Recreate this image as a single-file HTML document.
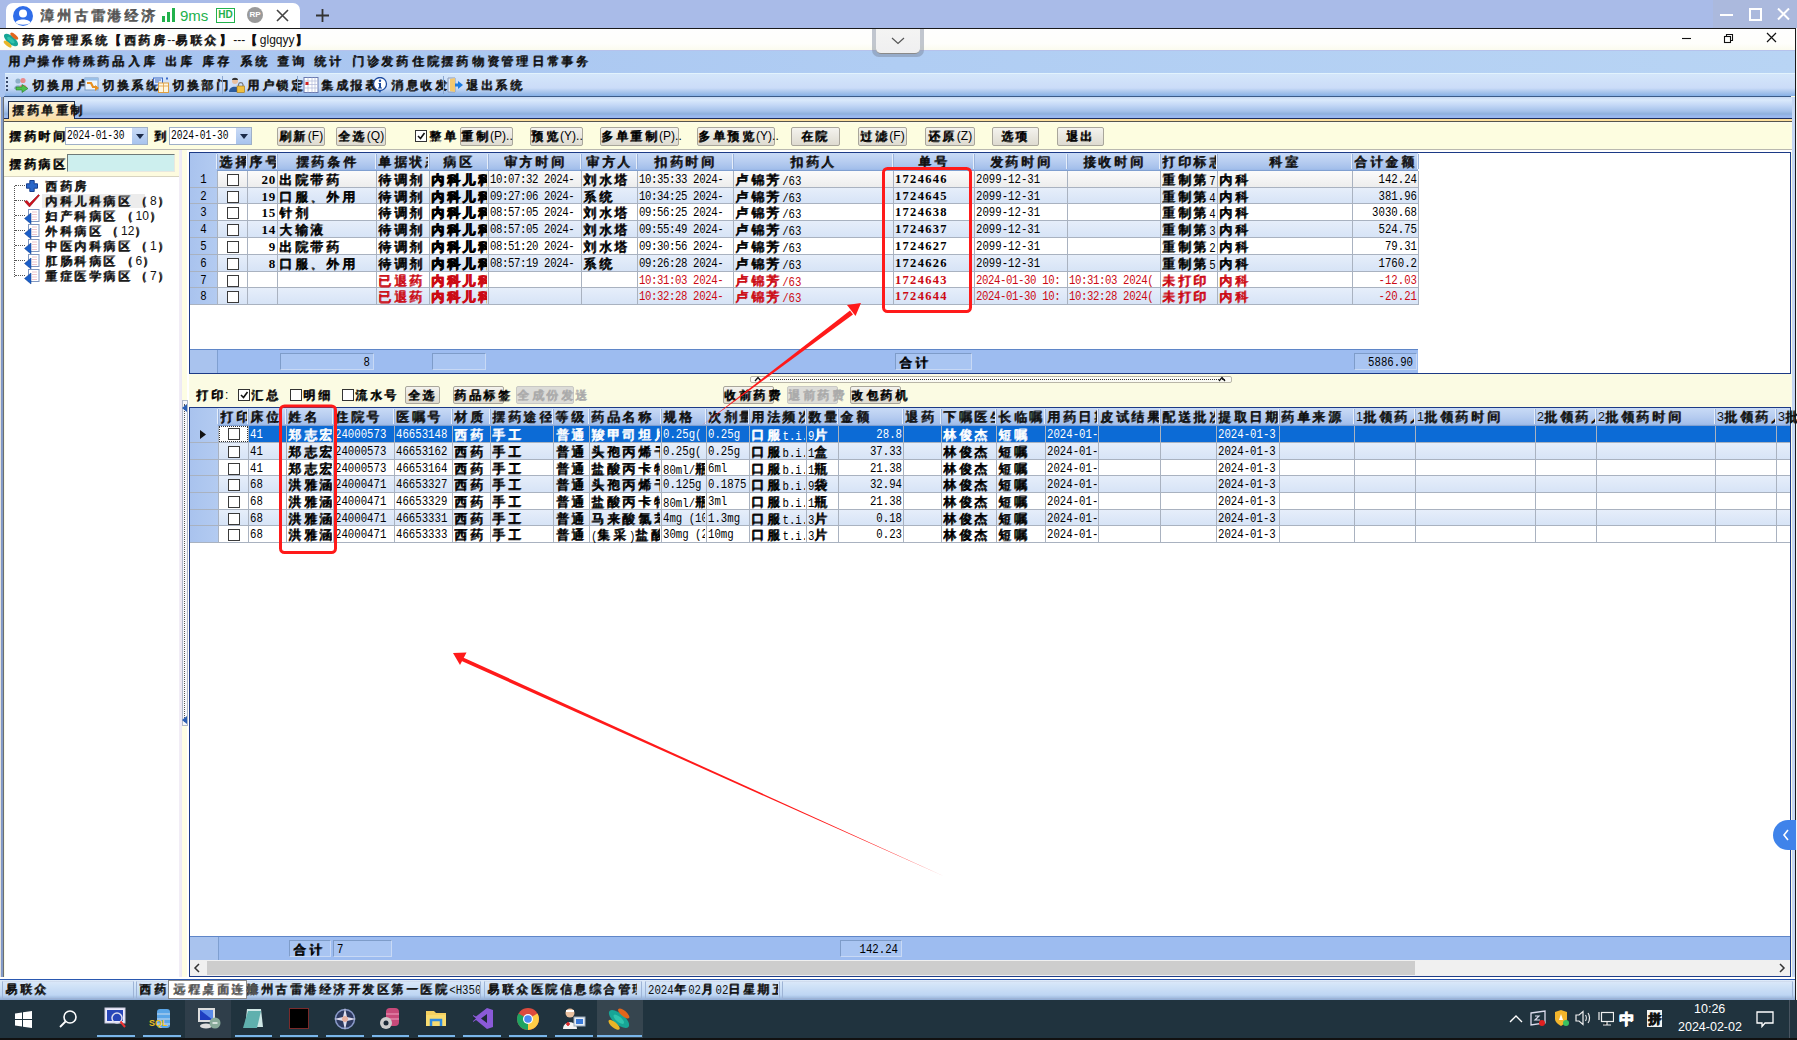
<!DOCTYPE html><html><head><meta charset="utf-8"><style>
*{box-sizing:border-box}
html,body{margin:0;padding:0}
body{width:1797px;height:1040px;position:relative;overflow:hidden;background:#fbfbe3;font-family:"Liberation Sans",sans-serif;font-size:12px;color:#000}
div{position:absolute}
.t{white-space:nowrap;line-height:14px}
.m{font-family:"Liberation Mono",monospace}
.c{font-family:"Liberation Sans",sans-serif;letter-spacing:0.21em;text-shadow:1px 0 0 currentColor,0 1px 0 currentColor}
.btn{background:linear-gradient(#f4f3ee,#dedbd0);border:1px solid #a9a69b;border-radius:2px;text-align:center;line-height:17px;white-space:nowrap;font-size:12px}

.g{white-space:nowrap;overflow:hidden;font-family:"Liberation Mono",monospace;font-size:10.7px;line-height:17px;height:17px}
.g .a{display:inline-block;transform:scaleY(1.25)}
.g .c{font-size:13px}
.hd{white-space:nowrap;overflow:hidden;font-family:"Liberation Sans",sans-serif;font-size:12.5px;line-height:17px;height:17px;color:#111}
.hd .c{font-size:13px}
.st .c{font-size:12px}
.b{font-weight:bold}
.red{color:#d0101a}
</style></head><body>
<div style="left:0px;top:0px;width:1797px;height:28px;background:#a9bbe8"></div>
<div style="left:6px;top:3px;width:294px;height:26px;background:#fff;border-radius:7px 7px 0 0"></div>
<svg style="position:absolute;left:12px;top:5px" width="22" height="22" viewBox="0 0 22 22"><circle cx="11" cy="11" r="10" fill="#2f6de9"/><circle cx="11" cy="8.5" r="4" fill="#fff"/><path d="M3.5 17.5 C5 13.5 17 13.5 18.5 17.5 C16 20.5 6 20.5 3.5 17.5Z" fill="#fff"/></svg>
<div class="t" style="left:40px;top:7px;font-size:13.5px;color:#555;line-height:17px;width:118px;overflow:hidden"><span class="c">漳州古雷港经济开</span><span class="a">...</span></div>
<svg style="position:absolute;left:161px;top:8px" width="16" height="14"><rect x="1" y="8" width="3" height="6" fill="#22b14c"/><rect x="6" y="4" width="3" height="10" fill="#22b14c"/><rect x="11" y="0" width="3" height="14" fill="#22b14c"/></svg>
<div class="t" style="left:180px;top:7px;font-size:15px;color:#22b14c;line-height:17px"><span class="a">9ms</span></div>
<div style="left:216px;top:8px;width:19px;height:15px;border:1.5px solid #22b14c;color:#22b14c;font-size:10px;font-weight:bold;text-align:center;line-height:12px"><span class="a">HD</span></div>
<div style="left:247px;top:7px;width:16px;height:16px;border-radius:50%;background:#9a9a9a;color:#fff;font-size:8px;font-weight:bold;text-align:center;line-height:16px"><span class="a">RP</span></div>
<svg style="position:absolute;left:276px;top:9px" width="13" height="13"><path d="M1 1L12 12M12 1L1 12" stroke="#444" stroke-width="1.6"/></svg>
<svg style="position:absolute;left:315px;top:8px" width="15" height="15"><path d="M7.5 1V14M1 7.5H14" stroke="#333" stroke-width="1.8"/></svg>
<div style="left:1713px;top:0px;width:84px;height:28px;background:#abb9dd"></div>
<svg style="position:absolute;left:1718px;top:8px" width="76" height="14"><path d="M2 7H15" stroke="#fff" stroke-width="2"/><rect x="32" y="1" width="11" height="11" fill="none" stroke="#fff" stroke-width="2"/><path d="M60 0.5L71 11.5M71 0.5L60 11.5" stroke="#fff" stroke-width="2"/></svg>
<div style="left:0px;top:28px;width:1797px;height:1px;background:#1a1a1a"></div>
<div style="left:0px;top:29px;width:1797px;height:21px;background:linear-gradient(#fefefe,#fefefb 70%,#fbfbee)"></div>
<svg style="position:absolute;left:2px;top:31px" width="18" height="18" viewBox="0 0 16 16"><ellipse cx="8" cy="8" rx="7.6" ry="3.4" transform="rotate(40 8 8)" fill="#17a596"/><ellipse cx="8" cy="8.2" rx="4" ry="1.6" transform="rotate(40 8 8)" fill="#3fd8bc" opacity=".6"/><ellipse cx="10.9" cy="4.6" rx="4.3" ry="1.7" transform="rotate(40 10.9 4.6)" fill="#e2661c"/><ellipse cx="5" cy="11.6" rx="4.3" ry="1.7" transform="rotate(40 5 11.6)" fill="#e9b526"/></svg>
<div class="t" style="left:22px;top:33px;font-size:12px;color:#111;line-height:15px"><span class="c">药房管理系统【西药房</span><span class="a">--</span><span class="c">易联众】</span><span class="a">---</span><span class="c">【</span><span class="a">glgqyy</span><span class="c">】</span></div>
<svg style="position:absolute;left:1680px;top:32px" width="100" height="14"><path d="M2 6.5H11" stroke="#111" stroke-width="1.1"/><rect x="44.5" y="4.5" width="6" height="6" fill="none" stroke="#111" stroke-width="1.1"/><path d="M46.5 4.5V2.5H52.5V8.5H50.5" fill="none" stroke="#111" stroke-width="1.1"/><path d="M87 1L96 10M96 1L87 10" stroke="#111" stroke-width="1.2"/></svg>
<div style="left:0px;top:50px;width:1797px;height:23px;background:linear-gradient(90deg,#a6c2ef,#b0cdf3 50%,#b8d4f4)"></div>
<div style="left:0px;top:50px;width:1797px;height:1px;background:#b6c2ec"></div>
<div class="t" style="left:8px;top:54px;font-size:12px;color:#111"><span class="c">用户操作</span></div>
<div class="t" style="left:68px;top:54px;font-size:12px;color:#111"><span class="c">特殊药品</span></div>
<div class="t" style="left:128px;top:54px;font-size:12px;color:#111"><span class="c">入库</span></div>
<div class="t" style="left:165px;top:54px;font-size:12px;color:#111"><span class="c">出库</span></div>
<div class="t" style="left:202px;top:54px;font-size:12px;color:#111"><span class="c">库存</span></div>
<div class="t" style="left:240px;top:54px;font-size:12px;color:#111"><span class="c">系统</span></div>
<div class="t" style="left:277px;top:54px;font-size:12px;color:#111"><span class="c">查询</span></div>
<div class="t" style="left:314px;top:54px;font-size:12px;color:#111"><span class="c">统计</span></div>
<div class="t" style="left:352px;top:54px;font-size:12px;color:#111"><span class="c">门诊发药</span></div>
<div class="t" style="left:412px;top:54px;font-size:12px;color:#111"><span class="c">住院摆药</span></div>
<div class="t" style="left:472px;top:54px;font-size:12px;color:#111"><span class="c">物资管理</span></div>
<div class="t" style="left:532px;top:54px;font-size:12px;color:#111"><span class="c">日常事务</span></div>
<div style="left:872px;top:29px;width:52px;height:28px;background:rgba(120,130,150,.45);border-radius:0 0 7px 7px"></div>
<div style="left:876px;top:29px;width:44px;height:25px;background:linear-gradient(#f4f4f3,#efeff0);border-bottom:1px solid #8a8a8a;border-radius:0 0 5px 5px"></div>
<svg style="position:absolute;left:891px;top:37px" width="14" height="8"><path d="M1 1L7 6.5L13 1" fill="none" stroke="#555" stroke-width="1.2"/></svg>
<div style="left:0px;top:73px;width:1797px;height:23px;background:linear-gradient(#e2f3fd 0,#e2f3fd 1px,#d4e6fa 1px,#cbdcf8 15px,#a9c5ec 19px,#86b0e6 23px)"></div>
<div style="left:0px;top:73px;width:5px;height:24px;background:#a9c4ef"></div>
<div style="left:4px;top:96px;width:1787px;height:1px;background:#3a5a88"></div>
<div style="left:6px;top:77px;width:2px;height:16px;background:repeating-linear-gradient(#3a4a6a 0 2px,transparent 2px 4px)"></div>
<svg style="position:absolute;left:13px;top:77px" width="16" height="16" viewBox="0 0 16 16"><circle cx="5" cy="4" r="2.6" fill="#8fb0c8"/><path d="M1 12C1 7 9 7 9 12Z" fill="#8fb0c8"/><circle cx="10" cy="3.5" r="2.6" fill="#e88a8a"/><path d="M6 11C6 6.5 14 6.5 14 11Z" fill="#e88a8a"/><path d="M3 10H9V7.5L15 11.5L9 15.5V13H3Z" fill="#4cc04c" stroke="#2a7a2a" stroke-width=".6"/></svg>
<div class="t" style="left:32px;top:78px;font-size:12px;color:#111"><span class="c">切换用户</span></div>
<svg style="position:absolute;left:84px;top:77px" width="16" height="16" viewBox="0 0 16 16"><rect x="1" y="1" width="13" height="12" fill="#eef5fb" stroke="#7a9ac0"/><rect x="1" y="1" width="13" height="2.5" fill="#9ac0e8"/><path d="M3 6L7 6L9 10L13 10" fill="none" stroke="#e89020" stroke-width="2.2"/><path d="M11 8L15 11L11 14Z" fill="#e89020"/></svg>
<div class="t" style="left:102px;top:78px;font-size:12px;color:#111"><span class="c">切换系统</span></div>
<svg style="position:absolute;left:153px;top:77px" width="16" height="16" viewBox="0 0 16 16"><rect x="0.5" y="1" width="9" height="7" fill="#dfe9f7" stroke="#3a6ac8"/><path d="M2 3H8M2 5H6" stroke="#3a6ac8"/><rect x="5.5" y="6" width="10" height="9.5" fill="#fdf6e0" stroke="#e0a040"/><path d="M5.5 9H15.5M10.5 6V15.5" stroke="#e0a040" stroke-width=".8"/><rect x="13" y="0.5" width="2" height="2" fill="#3a6ac8"/></svg>
<div class="t" style="left:172px;top:78px;font-size:12px;color:#111"><span class="c">切换部门</span></div>
<svg style="position:absolute;left:229px;top:77px" width="16" height="16" viewBox="0 0 16 16"><circle cx="6" cy="4" r="3" fill="#e8c0a0"/><path d="M3 3C3 0 9 0 9 3Z" fill="#333"/><path d="M0 15C0 8 11 8 11 15Z" fill="#2a5a9a"/><rect x="8" y="9" width="7.5" height="6.5" fill="#f0c040" stroke="#a07010" stroke-width=".6"/><path d="M9.5 9V7.5A2.3 2.3 0 0 1 14 7.5V9" fill="none" stroke="#777" stroke-width="1.2"/></svg>
<div class="t" style="left:247px;top:78px;font-size:12px;color:#111"><span class="c">用户锁定</span></div>
<svg style="position:absolute;left:303px;top:77px" width="16" height="16" viewBox="0 0 16 16"><rect x="1" y="0.5" width="14" height="15" fill="#fff" stroke="#6a7ab0"/><path d="M1 4H15M1 7.5H15M1 11H15M5 0.5V15.5M9 0.5V15.5M12 0.5V15.5" stroke="#b0b8d8" stroke-width=".7"/><rect x="2.5" y="5" width="3" height="3" fill="#d02020"/></svg>
<div class="t" style="left:321px;top:78px;font-size:12px;color:#111"><span class="c">集成报表</span></div>
<svg style="position:absolute;left:372px;top:77px" width="16" height="16" viewBox="0 0 16 16"><circle cx="8" cy="7" r="6.5" fill="#fff" stroke="#1a4aa0" stroke-width="1.3"/><path d="M6 13L8 16L9.5 13Z" fill="#1a4aa0"/><circle cx="8" cy="3.8" r="1.2" fill="#1a4aa0"/><path d="M6.5 6H9V10.5H10V11.5H6V10.5H7V7H6.5Z" fill="#1a4aa0"/></svg>
<div class="t" style="left:391px;top:78px;font-size:12px;color:#111"><span class="c">消息收发</span></div>
<svg style="position:absolute;left:447px;top:77px" width="16" height="16" viewBox="0 0 16 16"><path d="M1 1H8V15H1Z" fill="#dfe8f4" stroke="#8a9ab8"/><path d="M3 2L8 1V15L3 14Z" fill="#f2c870"/><path d="M16 8L11 4V6.5H8V9.5H11V12Z" fill="#1a7ae0"/></svg>
<div class="t" style="left:466px;top:78px;font-size:12px;color:#111"><span class="c">退出系统</span></div>
<div style="left:222px;top:76px;width:1px;height:18px;background:#8aa6cf"></div>
<div style="left:297px;top:76px;width:1px;height:18px;background:#8aa6cf"></div>
<div style="left:443px;top:76px;width:1px;height:18px;background:#8aa6cf"></div>
<div style="left:0px;top:97px;width:1797px;height:22px;background:linear-gradient(#c9daf3 0,#dae9fb 3px,#c4d8f6 8px,#a6c2ea 14px,#8eb0dc 17px,#9ab8ee 19px,#9ab8ee 22px)"></div>
<div style="left:4px;top:118px;width:1788px;height:1px;background:#1e2e5e"></div>
<div style="left:8px;top:101px;width:67px;height:19px;background:linear-gradient(#fdf1d8,#f8dca8);border:1px solid #1f2f4f;border-bottom:none"></div>
<div class="t" style="left:12px;top:103px;font-size:12px;color:#111"><span class="c">摆药单重制</span></div>
<div style="left:4px;top:119px;width:1788px;height:2px;background:#fddf9c"></div>
<div style="left:0px;top:97px;width:4px;height:884px;background:linear-gradient(90deg,#e6e2da 0 1px,#7c95cc 1px,#8aa0c4 3px,#6a6e72 3px)"></div>
<div style="left:1792px;top:97px;width:3px;height:884px;background:#c4d6f3"></div>
<div style="left:1795px;top:28px;width:1px;height:972px;background:#1a1a1a"></div>
<div style="left:1796px;top:28px;width:1px;height:972px;background:#f4f4f4"></div>
<div style="left:4px;top:121px;width:1788px;height:1px;background:#56554d"></div>
<div style="left:4px;top:122px;width:1788px;height:27px;background:linear-gradient(#fbfbf2 0,#fdfde0 2px)"></div>
<div style="left:4px;top:149px;width:1788px;height:1px;background:#b9b8b0"></div>
<div style="left:189px;top:150px;width:1603px;height:2px;background:#fff"></div>
<div class="t" style="left:9px;top:129px;font-size:12px"><span class="c">摆药时间</span><span class="a">:</span></div>
<div style="left:65px;top:127px;width:83px;height:18px;background:#fff;border:1px solid #9fb0c8"></div>
<div class="g" style="left:67px;top:127px;width:65px;font-size:9.6px"><span class="a">2024-01-30</span></div>
<div style="left:132px;top:128px;width:15px;height:16px;background:linear-gradient(#c9daf6,#a8c4ee)"></div>
<svg style="position:absolute;left:136px;top:134px" width="8" height="5"><path d="M0 0H8L4 5Z" fill="#1b2a49"/></svg>
<div class="t" style="left:154px;top:129px;font-size:12px"><span class="c">到</span></div>
<div style="left:169px;top:127px;width:83px;height:18px;background:#fff;border:1px solid #9fb0c8"></div>
<div class="g" style="left:171px;top:127px;width:65px;font-size:9.6px"><span class="a">2024-01-30</span></div>
<div style="left:236px;top:128px;width:15px;height:16px;background:linear-gradient(#c9daf6,#a8c4ee)"></div>
<svg style="position:absolute;left:240px;top:134px" width="8" height="5"><path d="M0 0H8L4 5Z" fill="#1b2a49"/></svg>
<div class="btn" style="left:277px;top:127px;width:48px;height:19px;"><span class="c">刷新</span><span class="a">(F)</span></div>
<div class="btn" style="left:336px;top:127px;width:50px;height:19px;"><span class="c">全选</span><span class="a">(Q)</span></div>
<div class="btn" style="left:460px;top:127px;width:53px;height:19px;"><span class="c">重制</span><span class="a">(P)..</span></div>
<div class="btn" style="left:530px;top:127px;width:53px;height:19px;"><span class="c">预览</span><span class="a">(Y)..</span></div>
<div class="btn" style="left:600px;top:127px;width:79px;height:19px;"><span class="c">多单重制</span><span class="a">(P)..</span></div>
<div class="btn" style="left:697px;top:127px;width:78px;height:19px;"><span class="c">多单预览</span><span class="a">(Y)..</span></div>
<div class="btn" style="left:791px;top:127px;width:49px;height:19px;"><span class="c">在院</span></div>
<div class="btn" style="left:858px;top:127px;width:49px;height:19px;"><span class="c">过滤</span><span class="a">(F)</span></div>
<div class="btn" style="left:925px;top:127px;width:50px;height:19px;"><span class="c">还原</span><span class="a">(Z)</span></div>
<div class="btn" style="left:992px;top:127px;width:47px;height:19px;"><span class="c">选项</span></div>
<div class="btn" style="left:1057px;top:127px;width:47px;height:19px;"><span class="c">退出</span></div>
<div style="left:415px;top:130px;width:12px;height:12px;background:#fff;border:1px solid #333"></div>
<svg style="position:absolute;left:416px;top:131px" width="10" height="10"><path d="M2 5L4.5 7.5L8.5 2" fill="none" stroke="#111" stroke-width="1.6"/></svg>
<div class="t" style="left:429px;top:129px;font-size:12px"><span class="c">整单</span></div>
<div style="left:4px;top:150px;width:185px;height:27px;background:#fdfbdf"></div>
<div style="left:4px;top:176px;width:177px;height:1px;background:#d8d4c0"></div>
<div class="t" style="left:9px;top:157px;font-size:12px"><span class="c">摆药病区</span><span class="a">:</span></div>
<div style="left:67px;top:154px;width:108px;height:18px;background:#cdefee;border:1px solid #6f7a78;border-right-color:#e8e8e0;border-bottom-color:#e8e8e0"></div>
<div style="left:5px;top:177px;width:176px;height:802px;background:#fff"></div>
<div style="left:179px;top:150px;width:10px;height:829px;background:linear-gradient(90deg,#f2eef6 0,#ece8f4 3px,#fdfde4 3px,#fdfde4 8px,#fff 8px)"></div>
<div style="left:14px;top:186px;width:1px;height:91px;border-left:1px dotted #555"></div>
<div style="left:15px;top:185px;width:10px;height:1px;border-top:1px dotted #555"></div>
<div class="t" style="left:45px;top:179px;font-size:12px;color:#111"><span class="c">西药房</span></div>
<svg style="position:absolute;left:26px;top:180px" width="12" height="12"><path d="M3.8 0.5H8.2V3.8H11.5V8.2H8.2V11.5H3.8V8.2H0.5V3.8H3.8Z" fill="#2a66c8" stroke="#173f8f" stroke-width="1"/></svg>
<div style="left:15px;top:200px;width:10px;height:1px;border-top:1px dotted #555"></div>
<div style="left:42px;top:194px;width:103px;height:14px;background:#ececec"></div>
<div class="t" style="left:45px;top:194px;font-size:12px;color:#111"><span class="c">内科儿科病区</span><span class="a"> </span><span class="c">（</span><span class="a">8</span><span class="c">）</span></div>
<svg style="position:absolute;left:24px;top:194px" width="16" height="14"><path d="M0.5 7.5L3 6.5L5.5 9.5L14.5 0.5L15.5 1.5L5.5 13Z" fill="#d0101c" stroke="#7a0a10" stroke-width=".5"/></svg>
<div style="left:15px;top:215px;width:10px;height:1px;border-top:1px dotted #555"></div>
<div class="t" style="left:45px;top:209px;font-size:12px;color:#111"><span class="c">妇产科病区</span><span class="a"> </span><span class="c">（</span><span class="a">10</span><span class="c">）</span></div>
<svg style="position:absolute;left:24px;top:208px" width="16" height="17"><rect x="4.5" y="1.5" width="10.5" height="12" fill="#fff" stroke="#7f96c0"/><path d="M8 4H13M8 6.5H13M8 9H13M8 11.5H13" stroke="#e8b8c0" stroke-width=".8"/><path d="M0.5 10.5L7 5V16Z" fill="#1a5ec8" stroke="#0f3a8a" stroke-width=".5"/></svg>
<div style="left:15px;top:230px;width:10px;height:1px;border-top:1px dotted #555"></div>
<div class="t" style="left:45px;top:224px;font-size:12px;color:#111"><span class="c">外科病区</span><span class="a"> </span><span class="c">（</span><span class="a">12</span><span class="c">）</span></div>
<svg style="position:absolute;left:24px;top:223px" width="16" height="17"><rect x="4.5" y="1.5" width="10.5" height="12" fill="#fff" stroke="#7f96c0"/><path d="M8 4H13M8 6.5H13M8 9H13M8 11.5H13" stroke="#e8b8c0" stroke-width=".8"/><path d="M0.5 10.5L7 5V16Z" fill="#1a5ec8" stroke="#0f3a8a" stroke-width=".5"/></svg>
<div style="left:15px;top:245px;width:10px;height:1px;border-top:1px dotted #555"></div>
<div class="t" style="left:45px;top:239px;font-size:12px;color:#111"><span class="c">中医内科病区</span><span class="a"> </span><span class="c">（</span><span class="a">1</span><span class="c">）</span></div>
<svg style="position:absolute;left:24px;top:238px" width="16" height="17"><rect x="4.5" y="1.5" width="10.5" height="12" fill="#fff" stroke="#7f96c0"/><path d="M8 4H13M8 6.5H13M8 9H13M8 11.5H13" stroke="#e8b8c0" stroke-width=".8"/><path d="M0.5 10.5L7 5V16Z" fill="#1a5ec8" stroke="#0f3a8a" stroke-width=".5"/></svg>
<div style="left:15px;top:260px;width:10px;height:1px;border-top:1px dotted #555"></div>
<div class="t" style="left:45px;top:254px;font-size:12px;color:#111"><span class="c">肛肠科病区</span><span class="a"> </span><span class="c">（</span><span class="a">6</span><span class="c">）</span></div>
<svg style="position:absolute;left:24px;top:253px" width="16" height="17"><rect x="4.5" y="1.5" width="10.5" height="12" fill="#fff" stroke="#7f96c0"/><path d="M8 4H13M8 6.5H13M8 9H13M8 11.5H13" stroke="#e8b8c0" stroke-width=".8"/><path d="M0.5 10.5L7 5V16Z" fill="#1a5ec8" stroke="#0f3a8a" stroke-width=".5"/></svg>
<div style="left:15px;top:275px;width:10px;height:1px;border-top:1px dotted #555"></div>
<div class="t" style="left:45px;top:269px;font-size:12px;color:#111"><span class="c">重症医学病区</span><span class="a"> </span><span class="c">（</span><span class="a">7</span><span class="c">）</span></div>
<svg style="position:absolute;left:24px;top:268px" width="16" height="17"><rect x="4.5" y="1.5" width="10.5" height="12" fill="#fff" stroke="#7f96c0"/><path d="M8 4H13M8 6.5H13M8 9H13M8 11.5H13" stroke="#e8b8c0" stroke-width=".8"/><path d="M0.5 10.5L7 5V16Z" fill="#1a5ec8" stroke="#0f3a8a" stroke-width=".5"/></svg>
<div style="left:189px;top:152px;width:1602px;height:222px;background:#fff;border:1px solid #1c3a86"></div>
<div style="left:190px;top:153px;width:1228px;height:18px;background:linear-gradient(#c9dbf6,#b6ccf0 50%,#a5c0eb 85%,#93b3e6)"></div>
<div style="left:190px;top:170px;width:1228px;height:1px;background:#7f9fd0"></div>
<div style="left:217px;top:171px;width:1201px;height:17px;background:linear-gradient(#fbfbfb,#ececec)"></div>
<div style="left:217px;top:188px;width:1201px;height:16px;background:linear-gradient(#e6eefa,#d6e3f6)"></div>
<div style="left:217px;top:204px;width:1201px;height:17px;background:#fff"></div>
<div style="left:217px;top:221px;width:1201px;height:17px;background:linear-gradient(#e6eefa,#d6e3f6)"></div>
<div style="left:217px;top:238px;width:1201px;height:17px;background:#fff"></div>
<div style="left:217px;top:255px;width:1201px;height:17px;background:linear-gradient(#e6eefa,#d6e3f6)"></div>
<div style="left:217px;top:272px;width:1201px;height:16px;background:#fff"></div>
<div style="left:217px;top:288px;width:1201px;height:17px;background:linear-gradient(#e6eefa,#d6e3f6)"></div>
<div style="left:190px;top:153px;width:27px;height:152px;background:linear-gradient(90deg,#a9c3ee,#b3cbf1)"></div>
<div style="left:190px;top:187px;width:1228px;height:1px;background:#a9b2c0"></div>
<div style="left:190px;top:203px;width:1228px;height:1px;background:#a9b2c0"></div>
<div style="left:190px;top:220px;width:1228px;height:1px;background:#a9b2c0"></div>
<div style="left:190px;top:237px;width:1228px;height:1px;background:#a9b2c0"></div>
<div style="left:190px;top:254px;width:1228px;height:1px;background:#a9b2c0"></div>
<div style="left:190px;top:271px;width:1228px;height:1px;background:#a9b2c0"></div>
<div style="left:190px;top:287px;width:1228px;height:1px;background:#a9b2c0"></div>
<div style="left:190px;top:304px;width:1228px;height:1px;background:#a9b2c0"></div>
<div style="left:216px;top:154px;width:1px;height:15px;background:#e6eefa"></div>
<div style="left:217px;top:154px;width:1px;height:15px;background:#9ab3dc"></div>
<div style="left:217px;top:170.8px;width:1px;height:134.2px;background:#a9b2c0"></div>
<div style="left:246px;top:154px;width:1px;height:15px;background:#e6eefa"></div>
<div style="left:247px;top:154px;width:1px;height:15px;background:#9ab3dc"></div>
<div style="left:247px;top:170.8px;width:1px;height:134.2px;background:#a9b2c0"></div>
<div style="left:276px;top:154px;width:1px;height:15px;background:#e6eefa"></div>
<div style="left:277px;top:154px;width:1px;height:15px;background:#9ab3dc"></div>
<div style="left:277px;top:170.8px;width:1px;height:134.2px;background:#a9b2c0"></div>
<div style="left:375px;top:154px;width:1px;height:15px;background:#e6eefa"></div>
<div style="left:376px;top:154px;width:1px;height:15px;background:#9ab3dc"></div>
<div style="left:376px;top:170.8px;width:1px;height:134.2px;background:#a9b2c0"></div>
<div style="left:428px;top:154px;width:1px;height:15px;background:#e6eefa"></div>
<div style="left:429px;top:154px;width:1px;height:15px;background:#9ab3dc"></div>
<div style="left:429px;top:170.8px;width:1px;height:134.2px;background:#a9b2c0"></div>
<div style="left:487px;top:154px;width:1px;height:15px;background:#e6eefa"></div>
<div style="left:488px;top:154px;width:1px;height:15px;background:#9ab3dc"></div>
<div style="left:488px;top:170.8px;width:1px;height:134.2px;background:#a9b2c0"></div>
<div style="left:580px;top:154px;width:1px;height:15px;background:#e6eefa"></div>
<div style="left:581px;top:154px;width:1px;height:15px;background:#9ab3dc"></div>
<div style="left:581px;top:170.8px;width:1px;height:134.2px;background:#a9b2c0"></div>
<div style="left:636px;top:154px;width:1px;height:15px;background:#e6eefa"></div>
<div style="left:637px;top:154px;width:1px;height:15px;background:#9ab3dc"></div>
<div style="left:637px;top:170.8px;width:1px;height:134.2px;background:#a9b2c0"></div>
<div style="left:732px;top:154px;width:1px;height:15px;background:#e6eefa"></div>
<div style="left:733px;top:154px;width:1px;height:15px;background:#9ab3dc"></div>
<div style="left:733px;top:170.8px;width:1px;height:134.2px;background:#a9b2c0"></div>
<div style="left:892px;top:154px;width:1px;height:15px;background:#e6eefa"></div>
<div style="left:893px;top:154px;width:1px;height:15px;background:#9ab3dc"></div>
<div style="left:893px;top:170.8px;width:1px;height:134.2px;background:#a9b2c0"></div>
<div style="left:973px;top:154px;width:1px;height:15px;background:#e6eefa"></div>
<div style="left:974px;top:154px;width:1px;height:15px;background:#9ab3dc"></div>
<div style="left:974px;top:170.8px;width:1px;height:134.2px;background:#a9b2c0"></div>
<div style="left:1066px;top:154px;width:1px;height:15px;background:#e6eefa"></div>
<div style="left:1067px;top:154px;width:1px;height:15px;background:#9ab3dc"></div>
<div style="left:1067px;top:170.8px;width:1px;height:134.2px;background:#a9b2c0"></div>
<div style="left:1159px;top:154px;width:1px;height:15px;background:#e6eefa"></div>
<div style="left:1160px;top:154px;width:1px;height:15px;background:#9ab3dc"></div>
<div style="left:1160px;top:170.8px;width:1px;height:134.2px;background:#a9b2c0"></div>
<div style="left:1216px;top:154px;width:1px;height:15px;background:#e6eefa"></div>
<div style="left:1217px;top:154px;width:1px;height:15px;background:#9ab3dc"></div>
<div style="left:1217px;top:170.8px;width:1px;height:134.2px;background:#a9b2c0"></div>
<div style="left:1351px;top:154px;width:1px;height:15px;background:#e6eefa"></div>
<div style="left:1352px;top:154px;width:1px;height:15px;background:#9ab3dc"></div>
<div style="left:1352px;top:170.8px;width:1px;height:134.2px;background:#a9b2c0"></div>
<div style="left:1417px;top:154px;width:1px;height:15px;background:#e6eefa"></div>
<div style="left:1418px;top:154px;width:1px;height:15px;background:#9ab3dc"></div>
<div style="left:1418px;top:170.8px;width:1px;height:134.2px;background:#a9b2c0"></div>
<div class="hd" style="left:219px;top:153px;width:27px;text-align:left"><span class="c">选择</span></div>
<div class="hd" style="left:249px;top:153px;width:27px;text-align:left"><span class="c">序号</span></div>
<div class="hd" style="left:279px;top:153px;width:96px;text-align:center"><span class="c">摆药条件</span></div>
<div class="hd" style="left:378px;top:153px;width:50px;text-align:left"><span class="c">单据状态</span></div>
<div class="hd" style="left:431px;top:153px;width:56px;text-align:center"><span class="c">病区</span></div>
<div class="hd" style="left:490px;top:153px;width:90px;text-align:center"><span class="c">审方时间</span></div>
<div class="hd" style="left:583px;top:153px;width:53px;text-align:center"><span class="c">审方人</span></div>
<div class="hd" style="left:639px;top:153px;width:93px;text-align:center"><span class="c">扣药时间</span></div>
<div class="hd" style="left:735px;top:153px;width:157px;text-align:center"><span class="c">扣药人</span></div>
<div class="hd" style="left:895px;top:153px;width:78px;text-align:center"><span class="c">单号</span></div>
<div class="hd" style="left:976px;top:153px;width:90px;text-align:center"><span class="c">发药时间</span></div>
<div class="hd" style="left:1069px;top:153px;width:90px;text-align:center"><span class="c">接收时间</span></div>
<div class="hd" style="left:1162px;top:153px;width:54px;text-align:left"><span class="c">打印标志</span></div>
<div class="hd" style="left:1219px;top:153px;width:132px;text-align:center"><span class="c">科室</span></div>
<div class="hd" style="left:1354px;top:153px;width:63px;text-align:center"><span class="c">合计金额</span></div>
<div class="g" style="left:191px;top:171px;width:25px;text-align:center;"><span class="a">1</span></div>
<div style="left:227px;top:174px;width:12px;height:12px;border:1px solid #3a3a3a;background:#fff"></div>
<div class="g" style="left:249px;top:171px;width:27px;text-align:right;font-weight:bold;font-family:Liberation Serif;font-size:13px;letter-spacing:0.8px">20</div>
<div class="g" style="left:279px;top:171px;width:96px;text-align:left;"><span class="c">出院带药</span></div>
<div class="g" style="left:378px;top:171px;width:50px;text-align:left;"><span class="c">待调剂</span></div>
<div class="g" style="left:431px;top:171px;width:56px;text-align:left;font-weight:bold;letter-spacing:0.5px"><span class="c">内科儿科</span></div>
<div class="g" style="left:490px;top:171px;width:90px;text-align:left;;letter-spacing:-0.4px"><span class="a">10:07:32 2024-</span></div>
<div class="g" style="left:583px;top:171px;width:53px;text-align:left;"><span class="c">刘水塔</span></div>
<div class="g" style="left:639px;top:171px;width:93px;text-align:left;;letter-spacing:-0.4px"><span class="a">10:35:33 2024-</span></div>
<div class="g" style="left:735px;top:171px;width:157px;text-align:left;"><span class="c">卢锦芳</span><span class="a">/63</span></div>
<div class="g" style="left:895px;top:171px;width:78px;text-align:left;font-weight:bold;font-family:Liberation Serif;font-size:12.5px;letter-spacing:1.3px">1724646</div>
<div class="g" style="left:976px;top:171px;width:90px;text-align:left;"><span class="a">2099-12-31</span></div>
<div class="g" style="left:1162px;top:171px;width:54px;text-align:left;"><span class="c">重制第</span><span class="a">7</span><span class="c">次</span></div>
<div class="g" style="left:1219px;top:171px;width:132px;text-align:left;"><span class="c">内科</span></div>
<div class="g" style="left:1354px;top:171px;width:63px;text-align:right;"><span class="a">142.24</span></div>
<div class="g" style="left:191px;top:188px;width:25px;text-align:center;"><span class="a">2</span></div>
<div style="left:227px;top:191px;width:12px;height:12px;border:1px solid #3a3a3a;background:#fff"></div>
<div class="g" style="left:249px;top:188px;width:27px;text-align:right;font-weight:bold;font-family:Liberation Serif;font-size:13px;letter-spacing:0.8px">19</div>
<div class="g" style="left:279px;top:188px;width:96px;text-align:left;"><span class="c">口服、外用</span></div>
<div class="g" style="left:378px;top:188px;width:50px;text-align:left;"><span class="c">待调剂</span></div>
<div class="g" style="left:431px;top:188px;width:56px;text-align:left;font-weight:bold;letter-spacing:0.5px"><span class="c">内科儿科</span></div>
<div class="g" style="left:490px;top:188px;width:90px;text-align:left;;letter-spacing:-0.4px"><span class="a">09:27:06 2024-</span></div>
<div class="g" style="left:583px;top:188px;width:53px;text-align:left;"><span class="c">系统</span></div>
<div class="g" style="left:639px;top:188px;width:93px;text-align:left;;letter-spacing:-0.4px"><span class="a">10:34:25 2024-</span></div>
<div class="g" style="left:735px;top:188px;width:157px;text-align:left;"><span class="c">卢锦芳</span><span class="a">/63</span></div>
<div class="g" style="left:895px;top:188px;width:78px;text-align:left;font-weight:bold;font-family:Liberation Serif;font-size:12.5px;letter-spacing:1.3px">1724645</div>
<div class="g" style="left:976px;top:188px;width:90px;text-align:left;"><span class="a">2099-12-31</span></div>
<div class="g" style="left:1162px;top:188px;width:54px;text-align:left;"><span class="c">重制第</span><span class="a">4</span><span class="c">次</span></div>
<div class="g" style="left:1219px;top:188px;width:132px;text-align:left;"><span class="c">内科</span></div>
<div class="g" style="left:1354px;top:188px;width:63px;text-align:right;"><span class="a">381.96</span></div>
<div class="g" style="left:191px;top:204px;width:25px;text-align:center;"><span class="a">3</span></div>
<div style="left:227px;top:207px;width:12px;height:12px;border:1px solid #3a3a3a;background:#fff"></div>
<div class="g" style="left:249px;top:204px;width:27px;text-align:right;font-weight:bold;font-family:Liberation Serif;font-size:13px;letter-spacing:0.8px">15</div>
<div class="g" style="left:279px;top:204px;width:96px;text-align:left;"><span class="c">针剂</span></div>
<div class="g" style="left:378px;top:204px;width:50px;text-align:left;"><span class="c">待调剂</span></div>
<div class="g" style="left:431px;top:204px;width:56px;text-align:left;font-weight:bold;letter-spacing:0.5px"><span class="c">内科儿科</span></div>
<div class="g" style="left:490px;top:204px;width:90px;text-align:left;;letter-spacing:-0.4px"><span class="a">08:57:05 2024-</span></div>
<div class="g" style="left:583px;top:204px;width:53px;text-align:left;"><span class="c">刘水塔</span></div>
<div class="g" style="left:639px;top:204px;width:93px;text-align:left;;letter-spacing:-0.4px"><span class="a">09:56:25 2024-</span></div>
<div class="g" style="left:735px;top:204px;width:157px;text-align:left;"><span class="c">卢锦芳</span><span class="a">/63</span></div>
<div class="g" style="left:895px;top:204px;width:78px;text-align:left;font-weight:bold;font-family:Liberation Serif;font-size:12.5px;letter-spacing:1.3px">1724638</div>
<div class="g" style="left:976px;top:204px;width:90px;text-align:left;"><span class="a">2099-12-31</span></div>
<div class="g" style="left:1162px;top:204px;width:54px;text-align:left;"><span class="c">重制第</span><span class="a">4</span><span class="c">次</span></div>
<div class="g" style="left:1219px;top:204px;width:132px;text-align:left;"><span class="c">内科</span></div>
<div class="g" style="left:1354px;top:204px;width:63px;text-align:right;"><span class="a">3030.68</span></div>
<div class="g" style="left:191px;top:221px;width:25px;text-align:center;"><span class="a">4</span></div>
<div style="left:227px;top:224px;width:12px;height:12px;border:1px solid #3a3a3a;background:#fff"></div>
<div class="g" style="left:249px;top:221px;width:27px;text-align:right;font-weight:bold;font-family:Liberation Serif;font-size:13px;letter-spacing:0.8px">14</div>
<div class="g" style="left:279px;top:221px;width:96px;text-align:left;"><span class="c">大输液</span></div>
<div class="g" style="left:378px;top:221px;width:50px;text-align:left;"><span class="c">待调剂</span></div>
<div class="g" style="left:431px;top:221px;width:56px;text-align:left;font-weight:bold;letter-spacing:0.5px"><span class="c">内科儿科</span></div>
<div class="g" style="left:490px;top:221px;width:90px;text-align:left;;letter-spacing:-0.4px"><span class="a">08:57:05 2024-</span></div>
<div class="g" style="left:583px;top:221px;width:53px;text-align:left;"><span class="c">刘水塔</span></div>
<div class="g" style="left:639px;top:221px;width:93px;text-align:left;;letter-spacing:-0.4px"><span class="a">09:55:49 2024-</span></div>
<div class="g" style="left:735px;top:221px;width:157px;text-align:left;"><span class="c">卢锦芳</span><span class="a">/63</span></div>
<div class="g" style="left:895px;top:221px;width:78px;text-align:left;font-weight:bold;font-family:Liberation Serif;font-size:12.5px;letter-spacing:1.3px">1724637</div>
<div class="g" style="left:976px;top:221px;width:90px;text-align:left;"><span class="a">2099-12-31</span></div>
<div class="g" style="left:1162px;top:221px;width:54px;text-align:left;"><span class="c">重制第</span><span class="a">3</span><span class="c">次</span></div>
<div class="g" style="left:1219px;top:221px;width:132px;text-align:left;"><span class="c">内科</span></div>
<div class="g" style="left:1354px;top:221px;width:63px;text-align:right;"><span class="a">524.75</span></div>
<div class="g" style="left:191px;top:238px;width:25px;text-align:center;"><span class="a">5</span></div>
<div style="left:227px;top:241px;width:12px;height:12px;border:1px solid #3a3a3a;background:#fff"></div>
<div class="g" style="left:249px;top:238px;width:27px;text-align:right;font-weight:bold;font-family:Liberation Serif;font-size:13px;letter-spacing:0.8px">9</div>
<div class="g" style="left:279px;top:238px;width:96px;text-align:left;"><span class="c">出院带药</span></div>
<div class="g" style="left:378px;top:238px;width:50px;text-align:left;"><span class="c">待调剂</span></div>
<div class="g" style="left:431px;top:238px;width:56px;text-align:left;font-weight:bold;letter-spacing:0.5px"><span class="c">内科儿科</span></div>
<div class="g" style="left:490px;top:238px;width:90px;text-align:left;;letter-spacing:-0.4px"><span class="a">08:51:20 2024-</span></div>
<div class="g" style="left:583px;top:238px;width:53px;text-align:left;"><span class="c">刘水塔</span></div>
<div class="g" style="left:639px;top:238px;width:93px;text-align:left;;letter-spacing:-0.4px"><span class="a">09:30:56 2024-</span></div>
<div class="g" style="left:735px;top:238px;width:157px;text-align:left;"><span class="c">卢锦芳</span><span class="a">/63</span></div>
<div class="g" style="left:895px;top:238px;width:78px;text-align:left;font-weight:bold;font-family:Liberation Serif;font-size:12.5px;letter-spacing:1.3px">1724627</div>
<div class="g" style="left:976px;top:238px;width:90px;text-align:left;"><span class="a">2099-12-31</span></div>
<div class="g" style="left:1162px;top:238px;width:54px;text-align:left;"><span class="c">重制第</span><span class="a">2</span><span class="c">次</span></div>
<div class="g" style="left:1219px;top:238px;width:132px;text-align:left;"><span class="c">内科</span></div>
<div class="g" style="left:1354px;top:238px;width:63px;text-align:right;"><span class="a">79.31</span></div>
<div class="g" style="left:191px;top:255px;width:25px;text-align:center;"><span class="a">6</span></div>
<div style="left:227px;top:258px;width:12px;height:12px;border:1px solid #3a3a3a;background:#fff"></div>
<div class="g" style="left:249px;top:255px;width:27px;text-align:right;font-weight:bold;font-family:Liberation Serif;font-size:13px;letter-spacing:0.8px">8</div>
<div class="g" style="left:279px;top:255px;width:96px;text-align:left;"><span class="c">口服、外用</span></div>
<div class="g" style="left:378px;top:255px;width:50px;text-align:left;"><span class="c">待调剂</span></div>
<div class="g" style="left:431px;top:255px;width:56px;text-align:left;font-weight:bold;letter-spacing:0.5px"><span class="c">内科儿科</span></div>
<div class="g" style="left:490px;top:255px;width:90px;text-align:left;;letter-spacing:-0.4px"><span class="a">08:57:19 2024-</span></div>
<div class="g" style="left:583px;top:255px;width:53px;text-align:left;"><span class="c">系统</span></div>
<div class="g" style="left:639px;top:255px;width:93px;text-align:left;;letter-spacing:-0.4px"><span class="a">09:26:28 2024-</span></div>
<div class="g" style="left:735px;top:255px;width:157px;text-align:left;"><span class="c">卢锦芳</span><span class="a">/63</span></div>
<div class="g" style="left:895px;top:255px;width:78px;text-align:left;font-weight:bold;font-family:Liberation Serif;font-size:12.5px;letter-spacing:1.3px">1724626</div>
<div class="g" style="left:976px;top:255px;width:90px;text-align:left;"><span class="a">2099-12-31</span></div>
<div class="g" style="left:1162px;top:255px;width:54px;text-align:left;"><span class="c">重制第</span><span class="a">5</span><span class="c">次</span></div>
<div class="g" style="left:1219px;top:255px;width:132px;text-align:left;"><span class="c">内科</span></div>
<div class="g" style="left:1354px;top:255px;width:63px;text-align:right;"><span class="a">1760.2</span></div>
<div class="g" style="left:191px;top:272px;width:25px;text-align:center;"><span class="a">7</span></div>
<div style="left:227px;top:275px;width:12px;height:12px;border:1px solid #3a3a3a;background:#fff"></div>
<div class="g" style="left:378px;top:272px;width:50px;text-align:left;color:#cc0a14"><span class="c">已退药</span></div>
<div class="g" style="left:431px;top:272px;width:56px;text-align:left;color:#cc0a14;font-weight:bold;letter-spacing:0.5px"><span class="c">内科儿科</span></div>
<div class="g" style="left:639px;top:272px;width:93px;text-align:left;color:#cc0a14;letter-spacing:-0.4px"><span class="a">10:31:03 2024-</span></div>
<div class="g" style="left:735px;top:272px;width:157px;text-align:left;color:#cc0a14"><span class="c">卢锦芳</span><span class="a">/63</span></div>
<div class="g" style="left:895px;top:272px;width:78px;text-align:left;color:#cc0a14;font-weight:bold;font-family:Liberation Serif;font-size:12.5px;letter-spacing:1.3px">1724643</div>
<div class="g" style="left:976px;top:272px;width:90px;text-align:left;color:#cc0a14;letter-spacing:-0.4px"><span class="a">2024-01-30 10:</span></div>
<div class="g" style="left:1069px;top:272px;width:90px;text-align:left;color:#cc0a14;letter-spacing:-0.4px"><span class="a">10:31:03 2024(</span></div>
<div class="g" style="left:1162px;top:272px;width:54px;text-align:left;color:#cc0a14"><span class="c">未打印</span></div>
<div class="g" style="left:1219px;top:272px;width:132px;text-align:left;color:#cc0a14"><span class="c">内科</span></div>
<div class="g" style="left:1354px;top:272px;width:63px;text-align:right;color:#cc0a14"><span class="a">-12.03</span></div>
<div class="g" style="left:191px;top:288px;width:25px;text-align:center;"><span class="a">8</span></div>
<div style="left:227px;top:291px;width:12px;height:12px;border:1px solid #3a3a3a;background:#fff"></div>
<div class="g" style="left:378px;top:288px;width:50px;text-align:left;color:#cc0a14"><span class="c">已退药</span></div>
<div class="g" style="left:431px;top:288px;width:56px;text-align:left;color:#cc0a14;font-weight:bold;letter-spacing:0.5px"><span class="c">内科儿科</span></div>
<div class="g" style="left:639px;top:288px;width:93px;text-align:left;color:#cc0a14;letter-spacing:-0.4px"><span class="a">10:32:28 2024-</span></div>
<div class="g" style="left:735px;top:288px;width:157px;text-align:left;color:#cc0a14"><span class="c">卢锦芳</span><span class="a">/63</span></div>
<div class="g" style="left:895px;top:288px;width:78px;text-align:left;color:#cc0a14;font-weight:bold;font-family:Liberation Serif;font-size:12.5px;letter-spacing:1.3px">1724644</div>
<div class="g" style="left:976px;top:288px;width:90px;text-align:left;color:#cc0a14;letter-spacing:-0.4px"><span class="a">2024-01-30 10:</span></div>
<div class="g" style="left:1069px;top:288px;width:90px;text-align:left;color:#cc0a14;letter-spacing:-0.4px"><span class="a">10:32:28 2024(</span></div>
<div class="g" style="left:1162px;top:288px;width:54px;text-align:left;color:#cc0a14"><span class="c">未打印</span></div>
<div class="g" style="left:1219px;top:288px;width:132px;text-align:left;color:#cc0a14"><span class="c">内科</span></div>
<div class="g" style="left:1354px;top:288px;width:63px;text-align:right;color:#cc0a14"><span class="a">-20.21</span></div>
<div style="left:190px;top:350px;width:1228px;height:23px;background:#9dbcf0"></div>
<div style="left:190px;top:350px;width:28px;height:23px;background:#a9c3ee"></div>
<div style="left:217px;top:350px;width:1px;height:23px;background:#7f9fd0"></div>
<div style="left:190px;top:349px;width:1228px;height:1px;background:#5f86c8"></div>
<div class="g" style="left:280px;top:353px;width:94px;height:17px;background:#a9c5f2;border:1px solid #7e9cc9;border-right-color:#c8d9f5;border-bottom-color:#c8d9f5;padding:0 3px;text-align:right"><span class="a">8</span></div>
<div class="g" style="left:432px;top:353px;width:54px;height:17px;background:#a9c5f2;border:1px solid #7e9cc9;border-right-color:#c8d9f5;border-bottom-color:#c8d9f5;padding:0 3px;text-align:left"></div>
<div class="g" style="left:895px;top:353px;width:77px;height:17px;background:#a9c5f2;border:1px solid #7e9cc9;border-right-color:#c8d9f5;border-bottom-color:#c8d9f5;padding:0 3px;text-align:left"><span class="c">合计</span></div>
<div class="g" style="left:1354px;top:353px;width:63px;height:17px;background:#a9c5f2;border:1px solid #7e9cc9;border-right-color:#c8d9f5;border-bottom-color:#c8d9f5;padding:0 3px;text-align:right"><span class="a">5886.90</span></div>
<div style="left:750px;top:376px;width:482px;height:7px;background:#fbfbf4;border:1px solid #b9b6a8;border-radius:2px"></div>
<div style="left:770px;top:379px;width:455px;height:1px;border-top:1px dotted #333"></div>
<svg style="position:absolute;left:754px;top:376px" width="8" height="6"><path d="M1 5L4 1.5L7 5" fill="none" stroke="#111" stroke-width="1.3"/></svg>
<svg style="position:absolute;left:1218px;top:376px" width="8" height="6"><path d="M1 5L4 1.5L7 5" fill="none" stroke="#111" stroke-width="1.3"/></svg>
<div style="left:182px;top:400px;width:6px;height:326px;background:#f6f7fb;border:1px solid #aeb8c8"></div>
<div style="left:184px;top:404px;width:2px;height:318px;border-left:1px dotted #555"></div>
<svg style="position:absolute;left:182px;top:404px" width="5" height="8"><path d="M5 0L0 4L5 8Z" fill="#2a5fb5"/></svg>
<svg style="position:absolute;left:182px;top:716px" width="5" height="8"><path d="M5 0L0 4L5 8Z" fill="#2a5fb5"/></svg>
<div class="t" style="left:196px;top:388px;font-size:12px"><span class="c">打印</span><span class="a">:</span></div>
<div style="left:238px;top:389px;width:12px;height:12px;background:#fff;border:1px solid #333"></div>
<div class="t" style="left:251px;top:388px;font-size:12px"><span class="c">汇总</span></div>
<div style="left:290px;top:389px;width:12px;height:12px;background:#fff;border:1px solid #333"></div>
<div class="t" style="left:303px;top:388px;font-size:12px"><span class="c">明细</span></div>
<div style="left:342px;top:389px;width:12px;height:12px;background:#fff;border:1px solid #333"></div>
<div class="t" style="left:355px;top:388px;font-size:12px"><span class="c">流水号</span></div>
<svg style="position:absolute;left:239px;top:390px" width="10" height="10"><path d="M2 5L4.5 7.5L8.5 2" fill="none" stroke="#111" stroke-width="1.6"/></svg>
<div class="btn" style="left:405px;top:386px;width:35px;height:18px;"><span class="c">全选</span></div>
<div class="btn" style="left:453px;top:386px;width:51px;height:18px;"><span class="c">药品标签</span></div>
<div class="btn" style="left:516px;top:386px;width:58px;height:18px;color:#aaa;background:#dcdcd8;border-color:#c8c8c4"><span class="c">全成份发送</span></div>
<div class="btn" style="left:723px;top:386px;width:51px;height:18px;"><span class="c">收前药费</span></div>
<div class="btn" style="left:787px;top:386px;width:51px;height:18px;color:#aaa;background:#dcdcd8;border-color:#c8c8c4"><span class="c">退前药费</span></div>
<div class="btn" style="left:850px;top:386px;width:51px;height:18px;"><span class="c">改包药机</span></div>
<div style="left:189px;top:407px;width:1602px;height:570px;background:#fff;border:1px solid #1c3a86"></div>
<div style="left:190px;top:408px;width:1600px;height:18px;background:linear-gradient(#c9dbf6,#b6ccf0 50%,#a5c0eb 85%,#93b3e6)"></div>
<div style="left:190px;top:425px;width:1600px;height:1px;background:#7f9fd0"></div>
<div style="left:218px;top:426px;width:1572px;height:17px;background:#0c6bd6"></div>
<div style="left:218px;top:443px;width:1572px;height:17px;background:linear-gradient(#e6eefa,#d6e3f6)"></div>
<div style="left:218px;top:460px;width:1572px;height:16px;background:#fff"></div>
<div style="left:218px;top:476px;width:1572px;height:17px;background:linear-gradient(#e6eefa,#d6e3f6)"></div>
<div style="left:218px;top:493px;width:1572px;height:17px;background:#fff"></div>
<div style="left:218px;top:510px;width:1572px;height:16px;background:linear-gradient(#e6eefa,#d6e3f6)"></div>
<div style="left:218px;top:526px;width:1572px;height:17px;background:#fff"></div>
<div style="left:190px;top:408px;width:28px;height:135px;background:linear-gradient(90deg,#a9c3ee,#b3cbf1)"></div>
<div style="left:190px;top:442px;width:1600px;height:1px;background:#a9b2c0"></div>
<div style="left:190px;top:459px;width:1600px;height:1px;background:#a9b2c0"></div>
<div style="left:190px;top:475px;width:1600px;height:1px;background:#a9b2c0"></div>
<div style="left:190px;top:492px;width:1600px;height:1px;background:#a9b2c0"></div>
<div style="left:190px;top:509px;width:1600px;height:1px;background:#a9b2c0"></div>
<div style="left:190px;top:525px;width:1600px;height:1px;background:#a9b2c0"></div>
<div style="left:190px;top:542px;width:1600px;height:1px;background:#a9b2c0"></div>
<div style="left:217px;top:409px;width:1px;height:15px;background:#e6eefa"></div>
<div style="left:218px;top:409px;width:1px;height:15px;background:#9ab3dc"></div>
<div style="left:218px;top:426.2px;width:1px;height:116.80000000000001px;background:#a9b2c0"></div>
<div style="left:247px;top:409px;width:1px;height:15px;background:#e6eefa"></div>
<div style="left:248px;top:409px;width:1px;height:15px;background:#9ab3dc"></div>
<div style="left:248px;top:426.2px;width:1px;height:116.80000000000001px;background:#a9b2c0"></div>
<div style="left:285px;top:409px;width:1px;height:15px;background:#e6eefa"></div>
<div style="left:286px;top:409px;width:1px;height:15px;background:#9ab3dc"></div>
<div style="left:286px;top:426.2px;width:1px;height:116.80000000000001px;background:#a9b2c0"></div>
<div style="left:332px;top:409px;width:1px;height:15px;background:#e6eefa"></div>
<div style="left:333px;top:409px;width:1px;height:15px;background:#9ab3dc"></div>
<div style="left:333px;top:426.2px;width:1px;height:116.80000000000001px;background:#a9b2c0"></div>
<div style="left:393px;top:409px;width:1px;height:15px;background:#e6eefa"></div>
<div style="left:394px;top:409px;width:1px;height:15px;background:#9ab3dc"></div>
<div style="left:394px;top:426.2px;width:1px;height:116.80000000000001px;background:#a9b2c0"></div>
<div style="left:451px;top:409px;width:1px;height:15px;background:#e6eefa"></div>
<div style="left:452px;top:409px;width:1px;height:15px;background:#9ab3dc"></div>
<div style="left:452px;top:426.2px;width:1px;height:116.80000000000001px;background:#a9b2c0"></div>
<div style="left:489px;top:409px;width:1px;height:15px;background:#e6eefa"></div>
<div style="left:490px;top:409px;width:1px;height:15px;background:#9ab3dc"></div>
<div style="left:490px;top:426.2px;width:1px;height:116.80000000000001px;background:#a9b2c0"></div>
<div style="left:552px;top:409px;width:1px;height:15px;background:#e6eefa"></div>
<div style="left:553px;top:409px;width:1px;height:15px;background:#9ab3dc"></div>
<div style="left:553px;top:426.2px;width:1px;height:116.80000000000001px;background:#a9b2c0"></div>
<div style="left:588px;top:409px;width:1px;height:15px;background:#e6eefa"></div>
<div style="left:589px;top:409px;width:1px;height:15px;background:#9ab3dc"></div>
<div style="left:589px;top:426.2px;width:1px;height:116.80000000000001px;background:#a9b2c0"></div>
<div style="left:660px;top:409px;width:1px;height:15px;background:#e6eefa"></div>
<div style="left:661px;top:409px;width:1px;height:15px;background:#9ab3dc"></div>
<div style="left:661px;top:426.2px;width:1px;height:116.80000000000001px;background:#a9b2c0"></div>
<div style="left:705px;top:409px;width:1px;height:15px;background:#e6eefa"></div>
<div style="left:706px;top:409px;width:1px;height:15px;background:#9ab3dc"></div>
<div style="left:706px;top:426.2px;width:1px;height:116.80000000000001px;background:#a9b2c0"></div>
<div style="left:748px;top:409px;width:1px;height:15px;background:#e6eefa"></div>
<div style="left:749px;top:409px;width:1px;height:15px;background:#9ab3dc"></div>
<div style="left:749px;top:426.2px;width:1px;height:116.80000000000001px;background:#a9b2c0"></div>
<div style="left:805px;top:409px;width:1px;height:15px;background:#e6eefa"></div>
<div style="left:806px;top:409px;width:1px;height:15px;background:#9ab3dc"></div>
<div style="left:806px;top:426.2px;width:1px;height:116.80000000000001px;background:#a9b2c0"></div>
<div style="left:837px;top:409px;width:1px;height:15px;background:#e6eefa"></div>
<div style="left:838px;top:409px;width:1px;height:15px;background:#9ab3dc"></div>
<div style="left:838px;top:426.2px;width:1px;height:116.80000000000001px;background:#a9b2c0"></div>
<div style="left:902px;top:409px;width:1px;height:15px;background:#e6eefa"></div>
<div style="left:903px;top:409px;width:1px;height:15px;background:#9ab3dc"></div>
<div style="left:903px;top:426.2px;width:1px;height:116.80000000000001px;background:#a9b2c0"></div>
<div style="left:940px;top:409px;width:1px;height:15px;background:#e6eefa"></div>
<div style="left:941px;top:409px;width:1px;height:15px;background:#9ab3dc"></div>
<div style="left:941px;top:426.2px;width:1px;height:116.80000000000001px;background:#a9b2c0"></div>
<div style="left:995px;top:409px;width:1px;height:15px;background:#e6eefa"></div>
<div style="left:996px;top:409px;width:1px;height:15px;background:#9ab3dc"></div>
<div style="left:996px;top:426.2px;width:1px;height:116.80000000000001px;background:#a9b2c0"></div>
<div style="left:1044px;top:409px;width:1px;height:15px;background:#e6eefa"></div>
<div style="left:1045px;top:409px;width:1px;height:15px;background:#9ab3dc"></div>
<div style="left:1045px;top:426.2px;width:1px;height:116.80000000000001px;background:#a9b2c0"></div>
<div style="left:1097px;top:409px;width:1px;height:15px;background:#e6eefa"></div>
<div style="left:1098px;top:409px;width:1px;height:15px;background:#9ab3dc"></div>
<div style="left:1098px;top:426.2px;width:1px;height:116.80000000000001px;background:#a9b2c0"></div>
<div style="left:1159px;top:409px;width:1px;height:15px;background:#e6eefa"></div>
<div style="left:1160px;top:409px;width:1px;height:15px;background:#9ab3dc"></div>
<div style="left:1160px;top:426.2px;width:1px;height:116.80000000000001px;background:#a9b2c0"></div>
<div style="left:1215px;top:409px;width:1px;height:15px;background:#e6eefa"></div>
<div style="left:1216px;top:409px;width:1px;height:15px;background:#9ab3dc"></div>
<div style="left:1216px;top:426.2px;width:1px;height:116.80000000000001px;background:#a9b2c0"></div>
<div style="left:1278px;top:409px;width:1px;height:15px;background:#e6eefa"></div>
<div style="left:1279px;top:409px;width:1px;height:15px;background:#9ab3dc"></div>
<div style="left:1279px;top:426.2px;width:1px;height:116.80000000000001px;background:#a9b2c0"></div>
<div style="left:1353px;top:409px;width:1px;height:15px;background:#e6eefa"></div>
<div style="left:1354px;top:409px;width:1px;height:15px;background:#9ab3dc"></div>
<div style="left:1354px;top:426.2px;width:1px;height:116.80000000000001px;background:#a9b2c0"></div>
<div style="left:1414px;top:409px;width:1px;height:15px;background:#e6eefa"></div>
<div style="left:1415px;top:409px;width:1px;height:15px;background:#9ab3dc"></div>
<div style="left:1415px;top:426.2px;width:1px;height:116.80000000000001px;background:#a9b2c0"></div>
<div style="left:1534px;top:409px;width:1px;height:15px;background:#e6eefa"></div>
<div style="left:1535px;top:409px;width:1px;height:15px;background:#9ab3dc"></div>
<div style="left:1535px;top:426.2px;width:1px;height:116.80000000000001px;background:#a9b2c0"></div>
<div style="left:1595px;top:409px;width:1px;height:15px;background:#e6eefa"></div>
<div style="left:1596px;top:409px;width:1px;height:15px;background:#9ab3dc"></div>
<div style="left:1596px;top:426.2px;width:1px;height:116.80000000000001px;background:#a9b2c0"></div>
<div style="left:1714px;top:409px;width:1px;height:15px;background:#e6eefa"></div>
<div style="left:1715px;top:409px;width:1px;height:15px;background:#9ab3dc"></div>
<div style="left:1715px;top:426.2px;width:1px;height:116.80000000000001px;background:#a9b2c0"></div>
<div style="left:1775px;top:409px;width:1px;height:15px;background:#e6eefa"></div>
<div style="left:1776px;top:409px;width:1px;height:15px;background:#9ab3dc"></div>
<div style="left:1776px;top:426.2px;width:1px;height:116.80000000000001px;background:#a9b2c0"></div>
<div class="hd" style="left:220px;top:408px;width:27px;text-align:left"><span class="c">打印</span></div>
<div class="hd" style="left:250px;top:408px;width:35px;text-align:left"><span class="c">床位</span></div>
<div class="hd" style="left:288px;top:408px;width:44px;text-align:left"><span class="c">姓名</span></div>
<div class="hd" style="left:335px;top:408px;width:58px;text-align:left"><span class="c">住院号</span></div>
<div class="hd" style="left:396px;top:408px;width:55px;text-align:left"><span class="c">医嘱号</span></div>
<div class="hd" style="left:454px;top:408px;width:35px;text-align:left"><span class="c">材质</span></div>
<div class="hd" style="left:492px;top:408px;width:60px;text-align:left"><span class="c">摆药途径</span></div>
<div class="hd" style="left:555px;top:408px;width:33px;text-align:left"><span class="c">等级</span></div>
<div class="hd" style="left:591px;top:408px;width:69px;text-align:left"><span class="c">药品名称</span></div>
<div class="hd" style="left:663px;top:408px;width:42px;text-align:left"><span class="c">规格</span></div>
<div class="hd" style="left:708px;top:408px;width:40px;text-align:left"><span class="c">次剂量</span></div>
<div class="hd" style="left:751px;top:408px;width:54px;text-align:left"><span class="c">用法频次</span></div>
<div class="hd" style="left:808px;top:408px;width:29px;text-align:left"><span class="c">数量</span></div>
<div class="hd" style="left:840px;top:408px;width:62px;text-align:left"><span class="c">金额</span></div>
<div class="hd" style="left:905px;top:408px;width:35px;text-align:left"><span class="c">退药</span></div>
<div class="hd" style="left:943px;top:408px;width:52px;text-align:left"><span class="c">下嘱医生</span></div>
<div class="hd" style="left:998px;top:408px;width:46px;text-align:left"><span class="c">长临嘱</span></div>
<div class="hd" style="left:1047px;top:408px;width:50px;text-align:left"><span class="c">用药日期</span></div>
<div class="hd" style="left:1100px;top:408px;width:59px;text-align:left"><span class="c">皮试结果</span></div>
<div class="hd" style="left:1162px;top:408px;width:53px;text-align:left"><span class="c">配送批次</span></div>
<div class="hd" style="left:1218px;top:408px;width:60px;text-align:left"><span class="c">提取日期</span></div>
<div class="hd" style="left:1281px;top:408px;width:72px;text-align:left"><span class="c">药单来源</span></div>
<div class="hd" style="left:1356px;top:408px;width:58px;text-align:left"><span class="a">1</span><span class="c">批领药人</span></div>
<div class="hd" style="left:1417px;top:408px;width:117px;text-align:left"><span class="a">1</span><span class="c">批领药时间</span></div>
<div class="hd" style="left:1537px;top:408px;width:58px;text-align:left"><span class="a">2</span><span class="c">批领药人</span></div>
<div class="hd" style="left:1598px;top:408px;width:116px;text-align:left"><span class="a">2</span><span class="c">批领药时间</span></div>
<div class="hd" style="left:1717px;top:408px;width:58px;text-align:left"><span class="a">3</span><span class="c">批领药人</span></div>
<div class="hd" style="left:1778px;top:408px;width:71px;text-align:left"><span class="a">3</span><span class="c">批领药时间</span></div>
<svg style="position:absolute;left:200px;top:430px" width="6" height="9"><path d="M0 0L6 4.5L0 9Z" fill="#111"/></svg>
<div style="left:228px;top:429px;width:12px;height:12px;border:1px solid #3a3a3a;background:#fff"></div>
<div class="g" style="left:250px;top:426px;width:35px;text-align:left;;color:#fff"><span class="a">41</span></div>
<div class="g" style="left:288px;top:426px;width:44px;text-align:left;;color:#fff"><span class="c">郑志宏</span></div>
<div class="g" style="left:335px;top:426px;width:58px;text-align:left;;color:#fff"><span class="a">24000573</span></div>
<div class="g" style="left:396px;top:426px;width:55px;text-align:left;;color:#fff"><span class="a">46653148</span></div>
<div class="g" style="left:454px;top:426px;width:35px;text-align:left;;color:#fff"><span class="c">西药</span></div>
<div class="g" style="left:492px;top:426px;width:60px;text-align:left;;color:#fff"><span class="c">手工</span></div>
<div class="g" style="left:555px;top:426px;width:33px;text-align:center;;color:#fff"><span class="c">普通</span></div>
<div class="g" style="left:591px;top:426px;width:69px;text-align:left;;color:#fff"><span class="c">羧甲司坦片</span></div>
<div class="g" style="left:663px;top:426px;width:42px;text-align:left;;color:#fff"><span class="a">0.25g(</span></div>
<div class="g" style="left:708px;top:426px;width:40px;text-align:left;;color:#fff"><span class="a">0.25g</span></div>
<div class="g" style="left:751px;top:426px;width:54px;text-align:left;;color:#fff"><span class="c">口服</span><span class="a"> t.i.</span></div>
<div class="g" style="left:808px;top:426px;width:29px;text-align:left;;color:#fff"><span class="a">9</span><span class="c">片</span></div>
<div class="g" style="left:840px;top:426px;width:62px;text-align:right;;color:#fff"><span class="a">28.8</span></div>
<div class="g" style="left:943px;top:426px;width:52px;text-align:left;;color:#fff"><span class="c">林俊杰</span></div>
<div class="g" style="left:998px;top:426px;width:46px;text-align:left;;color:#fff"><span class="c">短嘱</span></div>
<div class="g" style="left:1047px;top:426px;width:50px;text-align:left;;color:#fff"><span class="a">2024-01-</span></div>
<div class="g" style="left:1218px;top:426px;width:60px;text-align:left;;color:#fff"><span class="a">2024-01-3</span></div>
<div style="left:228px;top:446px;width:12px;height:12px;border:1px solid #3a3a3a;background:#fff"></div>
<div class="g" style="left:250px;top:443px;width:35px;text-align:left;"><span class="a">41</span></div>
<div class="g" style="left:288px;top:443px;width:44px;text-align:left;"><span class="c">郑志宏</span></div>
<div class="g" style="left:335px;top:443px;width:58px;text-align:left;"><span class="a">24000573</span></div>
<div class="g" style="left:396px;top:443px;width:55px;text-align:left;"><span class="a">46653162</span></div>
<div class="g" style="left:454px;top:443px;width:35px;text-align:left;"><span class="c">西药</span></div>
<div class="g" style="left:492px;top:443px;width:60px;text-align:left;"><span class="c">手工</span></div>
<div class="g" style="left:555px;top:443px;width:33px;text-align:center;"><span class="c">普通</span></div>
<div class="g" style="left:591px;top:443px;width:69px;text-align:left;"><span class="c">头孢丙烯干混</span></div>
<div class="g" style="left:663px;top:443px;width:42px;text-align:left;"><span class="a">0.25g(</span></div>
<div class="g" style="left:708px;top:443px;width:40px;text-align:left;"><span class="a">0.25g</span></div>
<div class="g" style="left:751px;top:443px;width:54px;text-align:left;"><span class="c">口服</span><span class="a"> b.i.</span></div>
<div class="g" style="left:808px;top:443px;width:29px;text-align:left;"><span class="a">1</span><span class="c">盒</span></div>
<div class="g" style="left:840px;top:443px;width:62px;text-align:right;"><span class="a">37.33</span></div>
<div class="g" style="left:943px;top:443px;width:52px;text-align:left;"><span class="c">林俊杰</span></div>
<div class="g" style="left:998px;top:443px;width:46px;text-align:left;"><span class="c">短嘱</span></div>
<div class="g" style="left:1047px;top:443px;width:50px;text-align:left;"><span class="a">2024-01-</span></div>
<div class="g" style="left:1218px;top:443px;width:60px;text-align:left;"><span class="a">2024-01-3</span></div>
<div style="left:228px;top:463px;width:12px;height:12px;border:1px solid #3a3a3a;background:#fff"></div>
<div class="g" style="left:250px;top:460px;width:35px;text-align:left;"><span class="a">41</span></div>
<div class="g" style="left:288px;top:460px;width:44px;text-align:left;"><span class="c">郑志宏</span></div>
<div class="g" style="left:335px;top:460px;width:58px;text-align:left;"><span class="a">24000573</span></div>
<div class="g" style="left:396px;top:460px;width:55px;text-align:left;"><span class="a">46653164</span></div>
<div class="g" style="left:454px;top:460px;width:35px;text-align:left;"><span class="c">西药</span></div>
<div class="g" style="left:492px;top:460px;width:60px;text-align:left;"><span class="c">手工</span></div>
<div class="g" style="left:555px;top:460px;width:33px;text-align:center;"><span class="c">普通</span></div>
<div class="g" style="left:591px;top:460px;width:69px;text-align:left;"><span class="c">盐酸丙卡特罗</span></div>
<div class="g" style="left:663px;top:460px;width:42px;text-align:left;"><span class="a">80ml/</span><span class="c">瓶</span></div>
<div class="g" style="left:708px;top:460px;width:40px;text-align:left;"><span class="a">6ml</span></div>
<div class="g" style="left:751px;top:460px;width:54px;text-align:left;"><span class="c">口服</span><span class="a"> b.i.</span></div>
<div class="g" style="left:808px;top:460px;width:29px;text-align:left;"><span class="a">1</span><span class="c">瓶</span></div>
<div class="g" style="left:840px;top:460px;width:62px;text-align:right;"><span class="a">21.38</span></div>
<div class="g" style="left:943px;top:460px;width:52px;text-align:left;"><span class="c">林俊杰</span></div>
<div class="g" style="left:998px;top:460px;width:46px;text-align:left;"><span class="c">短嘱</span></div>
<div class="g" style="left:1047px;top:460px;width:50px;text-align:left;"><span class="a">2024-01-</span></div>
<div class="g" style="left:1218px;top:460px;width:60px;text-align:left;"><span class="a">2024-01-3</span></div>
<div style="left:228px;top:479px;width:12px;height:12px;border:1px solid #3a3a3a;background:#fff"></div>
<div class="g" style="left:250px;top:476px;width:35px;text-align:left;"><span class="a">68</span></div>
<div class="g" style="left:288px;top:476px;width:44px;text-align:left;"><span class="c">洪雅涵</span></div>
<div class="g" style="left:335px;top:476px;width:58px;text-align:left;"><span class="a">24000471</span></div>
<div class="g" style="left:396px;top:476px;width:55px;text-align:left;"><span class="a">46653327</span></div>
<div class="g" style="left:454px;top:476px;width:35px;text-align:left;"><span class="c">西药</span></div>
<div class="g" style="left:492px;top:476px;width:60px;text-align:left;"><span class="c">手工</span></div>
<div class="g" style="left:555px;top:476px;width:33px;text-align:center;"><span class="c">普通</span></div>
<div class="g" style="left:591px;top:476px;width:69px;text-align:left;"><span class="c">头孢丙烯干混</span></div>
<div class="g" style="left:663px;top:476px;width:42px;text-align:left;"><span class="a">0.125g</span></div>
<div class="g" style="left:708px;top:476px;width:40px;text-align:left;"><span class="a">0.1875</span></div>
<div class="g" style="left:751px;top:476px;width:54px;text-align:left;"><span class="c">口服</span><span class="a"> b.i.</span></div>
<div class="g" style="left:808px;top:476px;width:29px;text-align:left;"><span class="a">9</span><span class="c">袋</span></div>
<div class="g" style="left:840px;top:476px;width:62px;text-align:right;"><span class="a">32.94</span></div>
<div class="g" style="left:943px;top:476px;width:52px;text-align:left;"><span class="c">林俊杰</span></div>
<div class="g" style="left:998px;top:476px;width:46px;text-align:left;"><span class="c">短嘱</span></div>
<div class="g" style="left:1047px;top:476px;width:50px;text-align:left;"><span class="a">2024-01-</span></div>
<div class="g" style="left:1218px;top:476px;width:60px;text-align:left;"><span class="a">2024-01-3</span></div>
<div style="left:228px;top:496px;width:12px;height:12px;border:1px solid #3a3a3a;background:#fff"></div>
<div class="g" style="left:250px;top:493px;width:35px;text-align:left;"><span class="a">68</span></div>
<div class="g" style="left:288px;top:493px;width:44px;text-align:left;"><span class="c">洪雅涵</span></div>
<div class="g" style="left:335px;top:493px;width:58px;text-align:left;"><span class="a">24000471</span></div>
<div class="g" style="left:396px;top:493px;width:55px;text-align:left;"><span class="a">46653329</span></div>
<div class="g" style="left:454px;top:493px;width:35px;text-align:left;"><span class="c">西药</span></div>
<div class="g" style="left:492px;top:493px;width:60px;text-align:left;"><span class="c">手工</span></div>
<div class="g" style="left:555px;top:493px;width:33px;text-align:center;"><span class="c">普通</span></div>
<div class="g" style="left:591px;top:493px;width:69px;text-align:left;"><span class="c">盐酸丙卡特罗</span></div>
<div class="g" style="left:663px;top:493px;width:42px;text-align:left;"><span class="a">80ml/</span><span class="c">瓶</span></div>
<div class="g" style="left:708px;top:493px;width:40px;text-align:left;"><span class="a">3ml</span></div>
<div class="g" style="left:751px;top:493px;width:54px;text-align:left;"><span class="c">口服</span><span class="a"> b.i.</span></div>
<div class="g" style="left:808px;top:493px;width:29px;text-align:left;"><span class="a">1</span><span class="c">瓶</span></div>
<div class="g" style="left:840px;top:493px;width:62px;text-align:right;"><span class="a">21.38</span></div>
<div class="g" style="left:943px;top:493px;width:52px;text-align:left;"><span class="c">林俊杰</span></div>
<div class="g" style="left:998px;top:493px;width:46px;text-align:left;"><span class="c">短嘱</span></div>
<div class="g" style="left:1047px;top:493px;width:50px;text-align:left;"><span class="a">2024-01-</span></div>
<div class="g" style="left:1218px;top:493px;width:60px;text-align:left;"><span class="a">2024-01-3</span></div>
<div style="left:228px;top:513px;width:12px;height:12px;border:1px solid #3a3a3a;background:#fff"></div>
<div class="g" style="left:250px;top:510px;width:35px;text-align:left;"><span class="a">68</span></div>
<div class="g" style="left:288px;top:510px;width:44px;text-align:left;"><span class="c">洪雅涵</span></div>
<div class="g" style="left:335px;top:510px;width:58px;text-align:left;"><span class="a">24000471</span></div>
<div class="g" style="left:396px;top:510px;width:55px;text-align:left;"><span class="a">46653331</span></div>
<div class="g" style="left:454px;top:510px;width:35px;text-align:left;"><span class="c">西药</span></div>
<div class="g" style="left:492px;top:510px;width:60px;text-align:left;"><span class="c">手工</span></div>
<div class="g" style="left:555px;top:510px;width:33px;text-align:center;"><span class="c">普通</span></div>
<div class="g" style="left:591px;top:510px;width:69px;text-align:left;"><span class="c">马来酸氯苯那</span></div>
<div class="g" style="left:663px;top:510px;width:42px;text-align:left;"><span class="a">4mg (10</span></div>
<div class="g" style="left:708px;top:510px;width:40px;text-align:left;"><span class="a">1.3mg</span></div>
<div class="g" style="left:751px;top:510px;width:54px;text-align:left;"><span class="c">口服</span><span class="a"> t.i.</span></div>
<div class="g" style="left:808px;top:510px;width:29px;text-align:left;"><span class="a">3</span><span class="c">片</span></div>
<div class="g" style="left:840px;top:510px;width:62px;text-align:right;"><span class="a">0.18</span></div>
<div class="g" style="left:943px;top:510px;width:52px;text-align:left;"><span class="c">林俊杰</span></div>
<div class="g" style="left:998px;top:510px;width:46px;text-align:left;"><span class="c">短嘱</span></div>
<div class="g" style="left:1047px;top:510px;width:50px;text-align:left;"><span class="a">2024-01-</span></div>
<div class="g" style="left:1218px;top:510px;width:60px;text-align:left;"><span class="a">2024-01-3</span></div>
<div style="left:228px;top:529px;width:12px;height:12px;border:1px solid #3a3a3a;background:#fff"></div>
<div class="g" style="left:250px;top:526px;width:35px;text-align:left;"><span class="a">68</span></div>
<div class="g" style="left:288px;top:526px;width:44px;text-align:left;"><span class="c">洪雅涵</span></div>
<div class="g" style="left:335px;top:526px;width:58px;text-align:left;"><span class="a">24000471</span></div>
<div class="g" style="left:396px;top:526px;width:55px;text-align:left;"><span class="a">46653333</span></div>
<div class="g" style="left:454px;top:526px;width:35px;text-align:left;"><span class="c">西药</span></div>
<div class="g" style="left:492px;top:526px;width:60px;text-align:left;"><span class="c">手工</span></div>
<div class="g" style="left:555px;top:526px;width:33px;text-align:center;"><span class="c">普通</span></div>
<div class="g" style="left:591px;top:526px;width:69px;text-align:left;"><span class="a">(</span><span class="c">集采</span><span class="a">)</span><span class="c">盐酸</span></div>
<div class="g" style="left:663px;top:526px;width:42px;text-align:left;"><span class="a">30mg (2</span></div>
<div class="g" style="left:708px;top:526px;width:40px;text-align:left;"><span class="a">10mg</span></div>
<div class="g" style="left:751px;top:526px;width:54px;text-align:left;"><span class="c">口服</span><span class="a"> t.i.</span></div>
<div class="g" style="left:808px;top:526px;width:29px;text-align:left;"><span class="a">3</span><span class="c">片</span></div>
<div class="g" style="left:840px;top:526px;width:62px;text-align:right;"><span class="a">0.23</span></div>
<div class="g" style="left:943px;top:526px;width:52px;text-align:left;"><span class="c">林俊杰</span></div>
<div class="g" style="left:998px;top:526px;width:46px;text-align:left;"><span class="c">短嘱</span></div>
<div class="g" style="left:1047px;top:526px;width:50px;text-align:left;"><span class="a">2024-01-</span></div>
<div class="g" style="left:1218px;top:526px;width:60px;text-align:left;"><span class="a">2024-01-3</span></div>
<style>.selrow{color:#fff}</style>
<div style="left:219px;top:426px;width:29px;height:16px;background:#fff;border:1px dotted #333"></div>
<div style="left:228px;top:428px;width:12px;height:12px;border:1px solid #3a3a3a;background:#fff"></div>
<div style="left:190px;top:937px;width:1600px;height:23px;background:#9dbcf0"></div>
<div style="left:190px;top:936px;width:1600px;height:1px;background:#5f86c8"></div>
<div style="left:190px;top:937px;width:28px;height:23px;background:#a9c3ee"></div>
<div style="left:218px;top:937px;width:1px;height:23px;background:#7f9fd0"></div>
<div class="g" style="left:289px;top:940px;width:42px;height:17px;background:#a9c5f2;border:1px solid #7e9cc9;border-right-color:#c8d9f5;border-bottom-color:#c8d9f5;padding:0 3px;text-align:left"><span class="c">合计</span></div>
<div class="g" style="left:333px;top:940px;width:59px;height:17px;background:#a9c5f2;border:1px solid #7e9cc9;border-right-color:#c8d9f5;border-bottom-color:#c8d9f5;padding:0 3px;text-align:left"><span class="a">7</span></div>
<div class="g" style="left:840px;top:940px;width:62px;height:17px;background:#a9c5f2;border:1px solid #7e9cc9;border-right-color:#c8d9f5;border-bottom-color:#c8d9f5;padding:0 3px;text-align:right"><span class="a">142.24</span></div>
<div style="left:190px;top:960px;width:1600px;height:16px;background:#f0f0f0"></div>
<div style="left:207px;top:961px;width:1208px;height:14px;background:#cdcdcd"></div>
<svg style="position:absolute;left:193px;top:963px" width="8" height="10"><path d="M6 1L2 5L6 9" fill="none" stroke="#333" stroke-width="1.5"/></svg>
<svg style="position:absolute;left:1778px;top:963px" width="8" height="10"><path d="M2 1L6 5L2 9" fill="none" stroke="#333" stroke-width="1.5"/></svg>
<div style="left:0px;top:977px;width:1795px;height:3px;background:linear-gradient(#fff 0,#fff 2px,#2a58b0 2px)"></div>
<div style="left:0px;top:980px;width:1795px;height:20px;background:linear-gradient(#dfeaf9,#d0e2f7 30%,#bed6f3 75%,#8eabd4)"></div>
<div style="left:2px;top:981px;width:132px;height:18px;border:1px solid #9eb4d6;border-top-color:#d0dcee"></div>
<div style="left:136px;top:981px;width:104px;height:18px;border:1px solid #9eb4d6;border-top-color:#d0dcee"></div>
<div style="left:244px;top:981px;width:237px;height:18px;border:1px solid #9eb4d6;border-top-color:#d0dcee"></div>
<div style="left:484px;top:981px;width:158px;height:18px;border:1px solid #9eb4d6;border-top-color:#d0dcee"></div>
<div style="left:645px;top:981px;width:135px;height:18px;border:1px solid #9eb4d6;border-top-color:#d0dcee"></div>
<div style="left:782px;top:981px;width:1011px;height:18px;border:1px solid #9eb4d6;border-top-color:#d0dcee"></div>
<div class="g st" style="left:5px;top:981px;width:120px;color:#111"><span class="c">易联众</span></div>
<div class="g st" style="left:139px;top:981px;width:95px;color:#111"><span class="c">西药房</span></div>
<div class="g st" style="left:246px;top:981px;width:234px;color:#111"><span class="c">漳州古雷港经济开发区第一医院</span><span class="a">&lt;H35062300184&gt;</span></div>
<div class="g st" style="left:487px;top:981px;width:150px;color:#111"><span class="c">易联众医院信息综合管理平台</span></div>
<div class="g st" style="left:648px;top:981px;width:130px;color:#111"><span class="a">2024</span><span class="c">年</span><span class="a">02</span><span class="c">月</span><span class="a">02</span><span class="c">日</span><span class="a"> </span><span class="c">星期五</span></div>
<div style="left:168px;top:980px;width:79px;height:19px;background:#fff;border:1px solid #8a8a8a"></div>
<div class="t" style="left:173px;top:982px;font-size:12px;color:#555"><span class="c">远程桌面连接</span></div>
<div style="left:0px;top:1000px;width:1797px;height:40px;background:#20333e"></div>
<div style="left:0px;top:1038px;width:1797px;height:2px;background:#111"></div>
<div style="left:185px;top:1000px;width:46px;height:38px;background:#2f3e4a"></div>
<div style="left:597px;top:1000px;width:46px;height:38px;background:#36454f"></div>
<svg style="position:absolute;left:15px;top:1011px" width="17" height="17"><path d="M0 2.5L7 1.5V8H0Z M8 1.3L17 0V8H8Z M0 9H7V15.5L0 14.5Z M8 9H17V17L8 15.7Z" fill="#fff"/></svg>
<svg style="position:absolute;left:59px;top:1009px" width="19" height="19"><circle cx="11" cy="8" r="6" fill="none" stroke="#fff" stroke-width="1.6"/><path d="M6.5 12.5L1 18" stroke="#fff" stroke-width="1.8"/></svg>
<svg style="position:absolute;left:104px;top:1007px" width="24" height="23"><rect x="1" y="1" width="20" height="15" fill="#eef" stroke="#ccd" /><rect x="3" y="3" width="16" height="11" fill="#2846b8"/><circle cx="13" cy="11" r="5" fill="none" stroke="#dde" stroke-width="1.5"/><path d="M16.5 14.5L21 20" stroke="#e33" stroke-width="2"/></svg>
<svg style="position:absolute;left:149px;top:1008px" width="24" height="22"><rect x="8" y="1" width="13" height="19" rx="3" fill="#5aa6e8"/><path d="M8 6H21M8 11H21M8 16H21" stroke="#cde" stroke-width="1"/><text x="0" y="18" font-family="Liberation Sans" font-weight="bold" font-size="9" fill="#f0c020">SQL</text></svg>
<svg style="position:absolute;left:197px;top:1007px" width="24" height="23"><rect x="1" y="1" width="17" height="14" fill="#ddd"/><rect x="3" y="3" width="13" height="10" fill="#1f3fc0"/><path d="M3 3L16 13V3Z" fill="#5a8ae8"/><ellipse cx="9" cy="19" rx="6" ry="2.5" fill="#ddd"/><circle cx="18" cy="16" r="5.5" fill="#8a9"/><path d="M15.5 16H20.5" stroke="#fff" stroke-width="1.3"/></svg>
<svg style="position:absolute;left:242px;top:1008px" width="22" height="22"><path d="M5 1H19L21 19H3Z" fill="#cfe8e6"/><path d="M1 20L6 3H19L15 20Z" fill="#5fb0ae"/></svg>
<svg style="position:absolute;left:289px;top:1008px" width="20" height="21"><rect x="0.5" y="0.5" width="19" height="20" fill="#000" stroke="#7a2a2a"/></svg>
<svg style="position:absolute;left:334px;top:1008px" width="22" height="22"><circle cx="11" cy="11" r="9.5" fill="#2e3a60" stroke="#8a9ac8" stroke-width="1.5"/><path d="M11 0L13 9L22 11L13 13L11 22L9 13L0 11L9 9Z" fill="#dde"/><circle cx="11" cy="11" r="3" fill="#e6b0a0"/></svg>
<svg style="position:absolute;left:379px;top:1007px" width="22" height="23"><rect x="7" y="1" width="13" height="18" rx="4" fill="#c84a7a"/><path d="M7 7H20M7 12H20" stroke="#f0a0c0" stroke-width="1"/><circle cx="7" cy="16" r="6" fill="#ccc"/><circle cx="7" cy="16" r="2.5" fill="#1c2a37"/></svg>
<svg style="position:absolute;left:426px;top:1009px" width="21" height="19"><path d="M0 2H8L10 4H20V17H0Z" fill="#f4d060"/><rect x="0" y="6" width="20" height="11" fill="#f8dc70"/><path d="M5 17V11H15V17" fill="none" stroke="#2f8ae0" stroke-width="2.5"/></svg>
<svg style="position:absolute;left:472px;top:1007px" width="22" height="23"><path d="M15 1L21 3V20L15 22L4 13L1 15V8L4 9.5Z" fill="#8a5ad8"/><path d="M15 7V16L9 11.5Z M1 9V14L4 11.5Z" fill="#1c2a37"/></svg>
<svg style="position:absolute;left:516px;top:1007px" width="24" height="24" viewBox="0 0 24 24"><circle cx="12" cy="12" r="11" fill="#dd4b3e"/><path d="M12 12 L2.5 6.5 A11 11 0 0 0 12 23Z" fill="#1da462"/><path d="M12 12 L21.5 6.5 A11 11 0 0 1 12 23Z" fill="#ffcd46"/><circle cx="12" cy="12" r="5" fill="#fff"/><circle cx="12" cy="12" r="3.8" fill="#4a8af4"/></svg>
<svg style="position:absolute;left:563px;top:1007px" width="23" height="23"><circle cx="7" cy="6" r="4.5" fill="#e8c0a0"/><path d="M3 3H11V5H3Z" fill="#fff"/><path d="M0 22C0 13 14 13 14 22Z" fill="#f4f4f4"/><path d="M3 17H7M5 15V19" stroke="#d22" stroke-width="1.6"/><rect x="11" y="10" width="11" height="9" fill="#e6eef6" stroke="#9ab"/><rect x="13" y="12" width="7" height="5" fill="#3a7ad8"/></svg>
<svg style="position:absolute;left:606px;top:1006px" width="26" height="26" viewBox="0 0 16 16"><ellipse cx="8" cy="8" rx="7.6" ry="3.4" transform="rotate(40 8 8)" fill="#17a596"/><ellipse cx="8" cy="8.2" rx="4" ry="1.6" transform="rotate(40 8 8)" fill="#3fd8bc" opacity=".6"/><ellipse cx="10.9" cy="4.6" rx="4.3" ry="1.7" transform="rotate(40 10.9 4.6)" fill="#e2661c"/><ellipse cx="5" cy="11.6" rx="4.3" ry="1.7" transform="rotate(40 5 11.6)" fill="#e9b526"/></svg>
<div style="left:97px;top:1035px;width:38px;height:2px;background:#7ab6ea"></div>
<div style="left:143px;top:1035px;width:38px;height:2px;background:#7ab6ea"></div>
<div style="left:235px;top:1035px;width:37px;height:2px;background:#7ab6ea"></div>
<div style="left:280px;top:1035px;width:38px;height:2px;background:#7ab6ea"></div>
<div style="left:326px;top:1035px;width:38px;height:2px;background:#7ab6ea"></div>
<div style="left:372px;top:1035px;width:37px;height:2px;background:#7ab6ea"></div>
<div style="left:418px;top:1035px;width:37px;height:2px;background:#7ab6ea"></div>
<div style="left:463px;top:1035px;width:38px;height:2px;background:#7ab6ea"></div>
<div style="left:509px;top:1035px;width:38px;height:2px;background:#7ab6ea"></div>
<div style="left:555px;top:1035px;width:38px;height:2px;background:#7ab6ea"></div>
<div style="left:597px;top:1035px;width:45px;height:2px;background:#7ab6ea"></div>
<svg style="position:absolute;left:1509px;top:1014px" width="14" height="9"><path d="M1 8L7 2L13 8" fill="none" stroke="#fff" stroke-width="1.4"/></svg>
<svg style="position:absolute;left:1530px;top:1010px" width="17" height="17"><path d="M1 3L15 1V13L1 15Z" fill="none" stroke="#dde" stroke-width="1.3"/><path d="M5 6H9L5 10H10" stroke="#dde" stroke-width="1.2" fill="none"/><circle cx="12" cy="13" r="3" fill="#e02020"/></svg>
<svg style="position:absolute;left:1554px;top:1010px" width="16" height="17"><path d="M1 2L7 0L13 2V9C13 13 7 16 7 16C7 16 1 13 1 9Z" fill="#f3b52c"/><path d="M7 4L5 10H9Z" fill="#fff"/><circle cx="12" cy="13" r="3" fill="#3ac060"/></svg>
<svg style="position:absolute;left:1575px;top:1010px" width="17" height="16"><path d="M1 5H4L8 1.5V14.5L4 11H1Z" fill="none" stroke="#eee" stroke-width="1.2"/><path d="M10.5 5C11.5 6.5 11.5 9.5 10.5 11M13 3C15 5.5 15 10.5 13 13" fill="none" stroke="#eee" stroke-width="1.2"/></svg>
<svg style="position:absolute;left:1598px;top:1011px" width="16" height="15"><rect x="3.5" y="1.5" width="12" height="9" fill="none" stroke="#eee" stroke-width="1.2"/><path d="M1 1V9M9 11V14H5M9 14H13" stroke="#eee" stroke-width="1.2"/></svg>
<div class="t" style="left:1619px;top:1010px;font-size:15px;color:#fff;line-height:17px;font-weight:bold"><span class="c">中</span></div>
<div style="left:1647px;top:1010px;width:15px;height:17px;background:#f4f4f4"></div>
<div class="t" style="left:1648px;top:1011px;font-size:13px;color:#111;line-height:15px;font-weight:bold"><span class="c">拼</span></div>
<div class="t" style="left:1694px;top:1002px;font-size:12.5px;color:#fff;line-height:14px"><span class="a">10:26</span></div>
<div class="t" style="left:1678px;top:1020px;font-size:12.5px;color:#fff;line-height:14px"><span class="a">2024-02-02</span></div>
<svg style="position:absolute;left:1756px;top:1011px" width="18" height="17"><path d="M1 1H17V12H9L6 15.5V12H1Z" fill="none" stroke="#fff" stroke-width="1.3"/></svg>
<div style="left:1789px;top:1000px;width:1px;height:38px;background:#4a5561"></div>
<svg style="position:absolute;left:1773px;top:820px" width="23" height="30"><path d="M23 0H15A15 15 0 0 0 15 30H23Z" fill="#3f83ea"/><path d="M15 10L11 15L15 20" fill="none" stroke="#fff" stroke-width="1.6"/></svg>
<svg style="position:absolute;left:0;top:0" width="1797" height="1040"><rect x="883.5" y="168.5" width="87" height="143" rx="4" fill="none" stroke="#ff1a1a" stroke-width="3"/><rect x="280.5" y="406" width="55" height="146.5" rx="4" fill="none" stroke="#ff1a1a" stroke-width="3"/><path d="M701 426 L850 310.5 L853 314.5 Z" fill="#ff1a1a"/><path d="M861 303 L847 305 L855.5 316Z" fill="#ff1a1a"/><path d="M943.5 876 L462 657 L460.5 660.5 Z" fill="#ff1a1a"/><path d="M453 653 L466.5 652.5 L460 665Z" fill="#ff1a1a"/></svg>
</body></html>
